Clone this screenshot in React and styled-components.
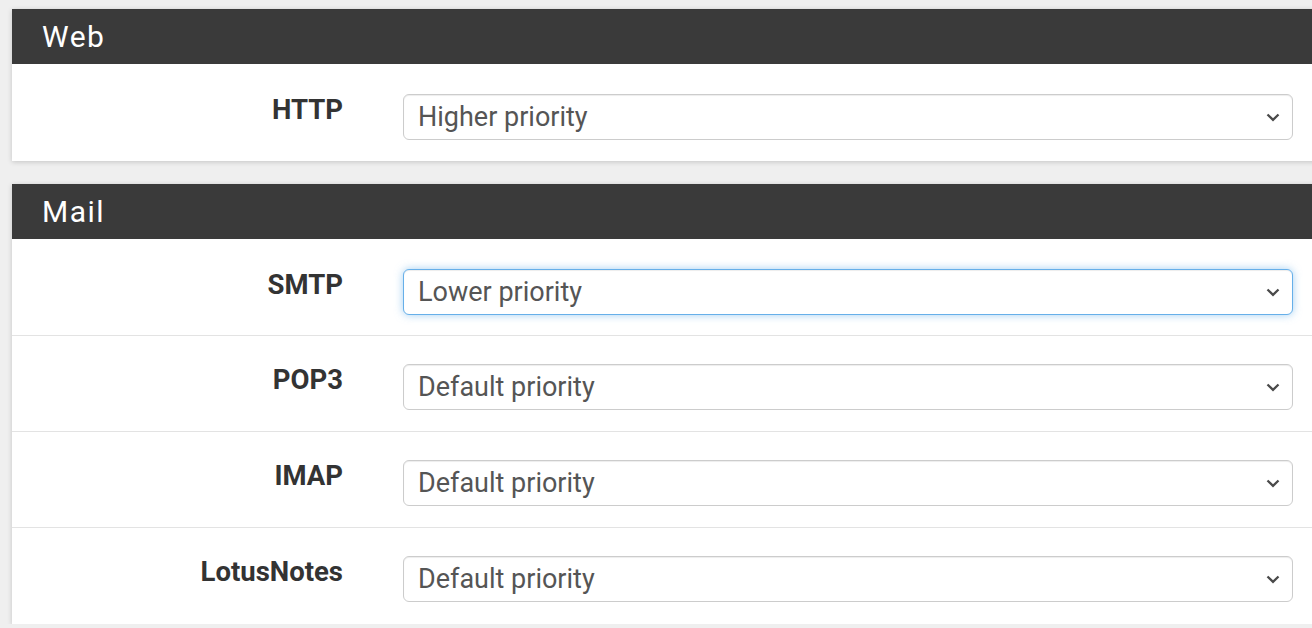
import React from "react"
import styled, { createGlobalStyle } from "styled-components"

const GlobalStyle = createGlobalStyle`
  html, body {
    margin: 0;
    padding: 0;
    overflow: hidden;
  }

  body {
    background: #efefef;
    font-family: Roboto, "Liberation Sans", sans-serif;
  }
`

const Page = styled.div`
  display: flex;
  flex-direction: column;
  gap: 23px;
  padding: 9px 0 0 12px;
  width: 1340px;
`

const Panel = styled.section`
  background: #fff;
  padding-bottom: 1px;
  box-shadow: 0 1px 5px rgba(0, 0, 0, 0.18);
`

const PanelHeading = styled.h2`
  margin: 0;
  height: 55px;
  display: flex;
  align-items: center;
  padding-left: 30px;
  background: #3a3a3a;
  color: #fff;
  font-size: 30px;
  font-weight: 400;
  letter-spacing: 1.5px;
`

const Row = styled.div`
  display: flex;
  align-items: flex-start;
  height: 96px;
  box-sizing: border-box;
  padding: 30px 59px 0 0;

  & + & {
    border-top: 1px solid #e3e3e3;
    padding-top: 28px;
  }
`

const Label = styled.label`
  width: 331px;
  flex-shrink: 0;
  text-align: right;
  font-size: 27.5px;
  font-weight: 700;
  line-height: 32px;
  color: #333;
  margin-right: 60px;
`

const SelectBox = styled.div`
  position: relative;
  flex: 1;
  height: 46px;
  box-sizing: border-box;
  display: flex;
  align-items: center;
  padding: 0 14px;
  border: 1px solid ${(p) => (p.focused ? "#66afe9" : "#cccccc")};
  border-radius: 6px;
  background: #fff;
  box-shadow: ${(p) =>
    p.focused
      ? "inset 0 1px 1px rgba(0,0,0,.075), 0 0 8px rgba(102,175,233,.6)"
      : "inset 0 1px 1px rgba(0,0,0,.075)"};
  font-size: 27px;
  line-height: 32px;
  color: #555;

  svg {
    position: absolute;
    right: 12px;
    top: 50%;
    margin-top: -4px;
  }
`

const Chevron = () => (
  <svg width="14" height="9" viewBox="0 0 14 9">
    <path d="M1.5 1.5 L7 6.8 L12.5 1.5" fill="none" stroke="#4a4a4a" strokeWidth="2.3" />
  </svg>
)

const Field = ({ label, value, focused }) => (
  <Row>
    <Label>{label}</Label>
    <SelectBox focused={focused}>
      {value}
      <Chevron />
    </SelectBox>
  </Row>
)

const sections = [
  {
    title: "Web",
    fields: [{ label: "HTTP", value: "Higher priority" }],
  },
  {
    title: "Mail",
    fields: [
      { label: "SMTP", value: "Lower priority", focused: true },
      { label: "POP3", value: "Default priority" },
      { label: "IMAP", value: "Default priority" },
      { label: "LotusNotes", value: "Default priority" },
    ],
  },
]

const App = () => {
  return (
    <>
      <GlobalStyle />
      <Page>
        {sections.map((s) => (
          <Panel key={s.title}>
            <PanelHeading>{s.title}</PanelHeading>
            {s.fields.map((f) => (
              <Field key={f.label} {...f} />
            ))}
          </Panel>
        ))}
      </Page>
    </>
  )
}

export default App
